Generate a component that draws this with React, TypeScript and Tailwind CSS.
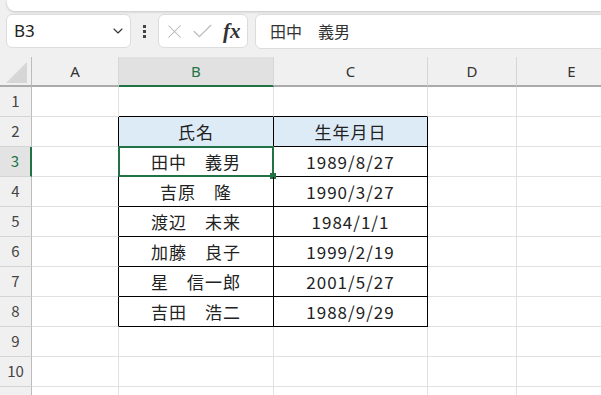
import { ChevronDown, X, Check } from 'lucide-react'

const rows: { name: string; date: string }[] = [
  { name: '田中　義男', date: '1989/8/27' },
  { name: '吉原　隆', date: '1990/3/27' },
  { name: '渡辺　未来', date: '1984/1/1' },
  { name: '加藤　良子', date: '1999/2/19' },
  { name: '星　信一郎', date: '2001/5/27' },
  { name: '吉田　浩二', date: '1988/9/29' },
]

const cols = [
  { key: 'A', w: 'w-[87px]' },
  { key: 'B', w: 'w-[155px]' },
  { key: 'C', w: 'w-[154px]' },
  { key: 'D', w: 'w-[89px]' },
  { key: 'E', w: 'w-[110px]' },
]

function RowHeader({ n, active }: { n: number; active?: boolean }) {
  return (
    <div
      className={
        'w-[32px] shrink-0 flex items-center justify-center text-[15px] border-b border-b-[#d4d4d4] ' +
        (active
          ? 'bg-[#e3e3e3] text-[#217346] border-r-2 border-r-[#217346]'
          : 'bg-[#f0f0f0] text-[#444] border-r border-r-[#bcbcbc]')
      }
    >
      {n <= 10 ? n : ''}
    </div>
  )
}

export default function App() {
  return (
    <div className="w-[601px] h-[395px] overflow-hidden bg-[#f0f0f0] font-['Noto_Sans','Noto_Sans_CJK_JP',sans-serif] text-[#222]">
      {/* ribbon edge */}
      <div className="h-[11px] ml-[7px] bg-white rounded-bl-[8px] shadow-[0_1px_3px_rgba(0,0,0,0.18)]" />

      {/* formula bar */}
      <div className="flex items-center h-[34px] mt-[3px] pl-[6px]">
        <div className="w-[125px] h-[34px] bg-white border border-[#dcdcdc] rounded-[6px] flex items-center pl-[7px] pr-[4px] shrink-0">
          <span className="text-[17px] flex-1">B3</span>
          <ChevronDown size={16} strokeWidth={1.6} className="text-[#333]" />
        </div>
        <div className="w-[27px] flex flex-col items-center gap-[2px] shrink-0">
          <span className="w-[3px] h-[3px] bg-[#444]" />
          <span className="w-[3px] h-[3px] bg-[#444]" />
          <span className="w-[3px] h-[3px] bg-[#444]" />
        </div>
        <div className="w-[90px] h-[34px] bg-white border border-[#dcdcdc] rounded-[6px] flex items-center pl-[4px] shrink-0">
          <X size={23} strokeWidth={1.1} className="text-[#b8b8b8]" />
          <Check size={25} strokeWidth={1.1} className="text-[#b8b8b8] ml-[4px]" />
          <span className="ml-[8px] font-['Liberation_Serif',serif] italic font-bold text-[21px] text-[#333] leading-none">fx</span>
        </div>
        <div className="ml-[7px] flex-1 h-[35px] -mr-[10px] bg-white border border-[#dcdcdc] rounded-l-[6px] flex items-center pl-[14px] text-[16px] font-['Noto_Sans_CJK_JP',sans-serif] text-[#333]">
          田中　義男
        </div>
      </div>

      {/* sheet */}
      <div className="mt-[9px]">
        {/* column headers */}
        <div className="flex h-[30px]">
          <div className="w-[32px] shrink-0 bg-[#f0f0f0] border-r border-r-[#bcbcbc] border-b-2 border-b-[#ababab] flex items-end justify-end pr-[4px] pb-[2px]">
            <svg width="21" height="21" viewBox="0 0 21 21">
              <polygon points="21,0 21,21 0,21" fill="#d6d6d6" />
            </svg>
          </div>
          {cols.map((c) => (
            <div
              key={c.key}
              className={
                c.w +
                ' shrink-0 flex items-center justify-center text-[15px] border-r border-r-[#d6d6d6] border-b-2 ' +
                (c.key === 'B'
                  ? 'bg-[#e1e1e1] text-[#217346] border-b-[#217346]'
                  : 'bg-[#f0f0f0] text-[#333] border-b-[#ababab]')
              }
            >
              {c.key}
            </div>
          ))}
        </div>

        {/* rows */}
        {Array.from({ length: 11 }, (_, i) => i + 1).map((n) => {
          const inTable = n >= 2 && n <= 8
          const dataRow = n >= 3 && n <= 8 ? rows[n - 3] : null
          const head = n === 2
          const black = inTable || n === 1
          return (
            <div key={n} className="flex h-[30px] bg-white font-['Noto_Sans_CJK_JP',sans-serif] text-[#222]">
              <RowHeader n={n} active={n === 3} />
              <div
                className={
                  'w-[87px] shrink-0 border-b border-b-[#e1e1e1] border-r ' +
                  (inTable ? 'border-r-black' : 'border-r-[#e1e1e1]')
                }
              />
              <div
                className={
                  'relative w-[155px] shrink-0 flex items-center justify-center text-[17px] tracking-[1px] border-r border-b ' +
                  (inTable ? 'border-r-black ' : 'border-r-[#e1e1e1] ') +
                  (black ? 'border-b-black ' : 'border-b-[#e1e1e1] ') +
                  (head ? 'bg-[#ddebf7]' : '')
                }
              >
                {head ? '氏名' : dataRow?.name}
                {n === 3 && (
                  <div className="absolute -top-[1px] -left-[1px] -right-[1px] -bottom-[1px] border-2 border-[#217346]">
                    <div className="absolute -right-[4px] -bottom-[4px] w-[6px] h-[6px] bg-[#217346]" />
                  </div>
                )}
              </div>
              <div
                className={
                  'w-[154px] shrink-0 flex items-center justify-center text-[17px] tracking-[1px] border-r border-b ' +
                  (inTable ? 'border-r-black ' : 'border-r-[#e1e1e1] ') +
                  (black ? 'border-b-black ' : 'border-b-[#e1e1e1] ') +
                  (head ? 'bg-[#ddebf7]' : '')
                }
              >
                {head ? '生年月日' : dataRow?.date}
              </div>
              <div className="w-[89px] shrink-0 border-r border-r-[#e1e1e1] border-b border-b-[#e1e1e1]" />
              <div className="w-[110px] shrink-0 border-r border-r-[#e1e1e1] border-b border-b-[#e1e1e1]" />
            </div>
          )
        })}
      </div>
    </div>
  )
}
